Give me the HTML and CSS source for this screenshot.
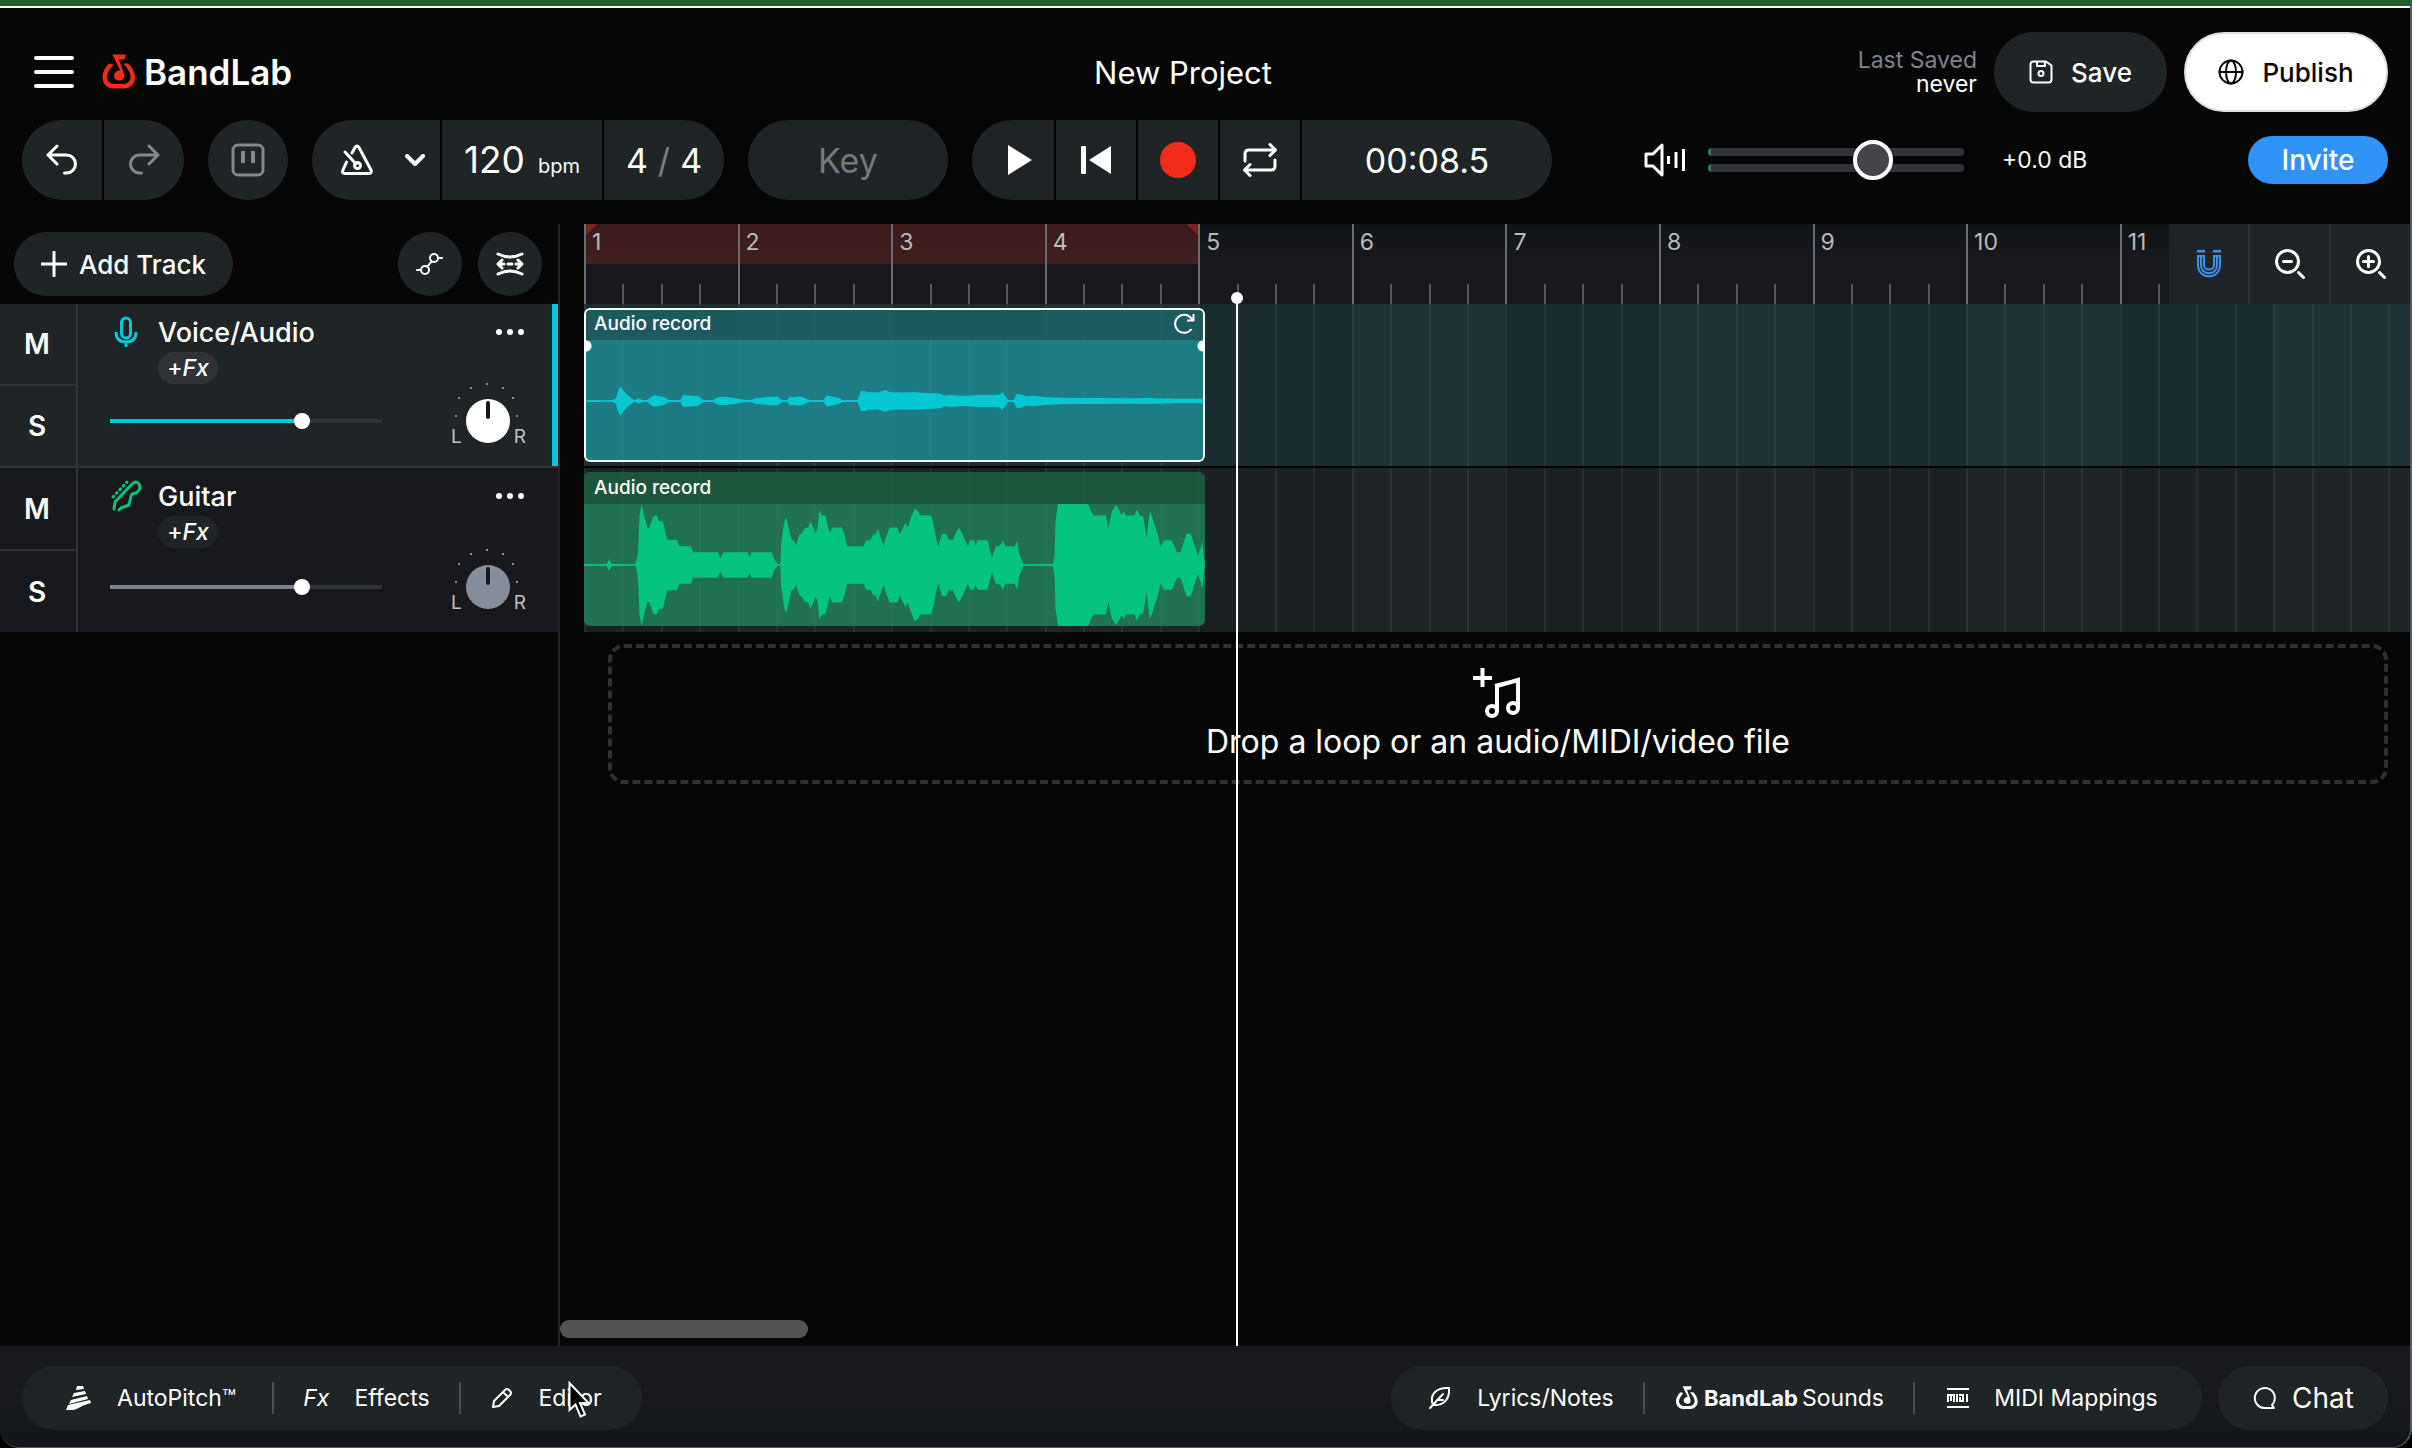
FILE: index.html
```html
<!DOCTYPE html>
<html lang="en">
<head>
    <meta charset="UTF-8">
    <meta name="viewport" content="width=device-width, initial-scale=1.0">
    <title>New Project - BandLab</title>
    <link rel="stylesheet" href="styles.css">
</head>
<body>
<svg class="defs" aria-hidden="true">
    <symbol id="logo" viewBox="0 0 36 36">
        <path d="M8 9.500C4 14 1.500 18 1.500 23c0 7 5 11.500 11 11.500h10.500c6 0 11-4.500 11-11.500 0-5-3-9.500-6.500-13.500l-5 0c4 5 7 9 7 13.500 0 4-3 7-7 7h-9.500c-4 0-7-3-7-7 0-4.500 3.500-8.500 6.500-12.500z" fill="currentColor"/>
        <path d="M11.500 0.500h13.500l-1.500 5h-5.500l4.800 13.500c2 5.500-1 7.500-4.500 7.500s-5.800-2.500-5.200-5.500 3.200-4.800 6-4.500z" fill="currentColor"/>
    </symbol>
    <symbol id="more" viewBox="0 0 28 8">
        <circle cx="3" cy="4" r="3"/><circle cx="14" cy="4" r="3"/><circle cx="25" cy="4" r="3"/>
    </symbol>
    <symbol id="pan-dots" viewBox="0 0 64 40">
        <path d="M1 33h2M4 15h2M16 5h2M32 1h2M48 5h2M58 15h2M62 33h2" stroke="#8a8d90" stroke-width="2"/>
    </symbol>
</svg>

<div class="app">
    <header class="topbar">
        <div class="brand">
            <button class="icon-button" aria-label="Menu">
                <svg width="40" height="32" viewBox="0 0 40 32"><path d="M2 2h36M2 16h36M2 30h36" class="line thick"/></svg>
            </button>
            <a class="logo" href="#">
                <svg class="logo-mark" width="36" height="36"><use href="#logo"/></svg>
                <span>BandLab</span>
            </a>
        </div>
        <h1>New Project</h1>
        <div class="account">
            <p class="saved"><span>Last Saved</span>never</p>
            <button class="pill save">
                <svg width="24" height="24" viewBox="0 0 24 24" class="line thin"><path d="M4 1.500h13l5.500 4v14q0 3-3 3h-15q-3 0-3-3v-15q0-3 3-3zM8 2v4h8v-4"/><circle cx="12" cy="13.500" r="2.500"/></svg>
                Save
            </button>
            <button class="pill publish">
                <svg width="26" height="26" viewBox="0 0 26 26" class="line thin"><circle cx="13" cy="13" r="11.500"/><ellipse cx="13" cy="13" rx="5" ry="11.500"/><path d="M1.500 13h23"/></svg>
                Publish
            </button>
        </div>
    </header>

    <div class="toolbar">
        <div class="group">
            <button class="cell" aria-label="Undo">
                <svg width="32" height="32" viewBox="0 0 32 32" class="line"><path d="M11 2L2 11l9 9M2.500 11h18c5 0 9 4 9 9s-4 9-9 9h-2"/></svg>
            </button>
            <button class="cell dim" aria-label="Redo">
                <svg width="32" height="32" viewBox="0 0 32 32" class="line"><path d="M21 2l9 9-9 9M29.500 11h-18c-5 0-9 4-9 9s4 9 9 9h2"/></svg>
            </button>
        </div>
        <div class="group">
            <button class="cell dim" aria-label="Sampler">
                <svg width="34" height="34" viewBox="0 0 34 34" class="line"><rect x="2" y="2" width="30" height="30" rx="5"/><path d="M12 8v12M22 8v12" stroke-width="4" stroke-linecap="butt"/></svg>
            </button>
        </div>
        <div class="group">
            <button class="cell metronome" aria-label="Metronome">
                <svg width="32" height="32" viewBox="0 0 32 32" class="line"><path d="M11 9L14 3.500q2-3 4 0L30 26q1 3.500-2 3.500h-24q-3.500 0-2-3.500L5.500 18M4 8l11 12"/><circle cx="16.500" cy="21.500" r="3"/></svg>
                <svg width="20" height="12" viewBox="0 0 20 12" class="line thick"><path d="M2 2l8 8 8-8"/></svg>
            </button>
            <label class="cell tempo"><input type="text" value="120"> bpm</label>
            <button class="cell meter">4<i>/</i>4</button>
        </div>
        <div class="group">
            <button class="cell key">Key</button>
        </div>
        <div class="group">
            <button class="cell transport first" aria-label="Play">
                <svg width="24" height="32" viewBox="0 0 24 32"><path d="M0 1l24 15L0 31z" fill="#fff"/></svg>
            </button>
            <button class="cell transport" aria-label="Go to start">
                <svg width="30" height="28" viewBox="0 0 30 28"><path d="M0 1q0-1 1-1h3q1 0 1 1v26q0 1-1 1h-3q-1 0-1-1zM30 0v28L8 14z" fill="#fff"/></svg>
            </button>
            <button class="cell transport" aria-label="Record"><span class="record-dot"></span></button>
            <button class="cell transport" aria-label="Loop">
                <svg width="34" height="34" viewBox="0 0 34 34" class="line"><path d="M27 1.500l5.500 5.500-5.500 5.500M32 7H6q-4 0-4 4v7M7 21.500L1.500 27 7 32.500M2 27h26q4 0 4-4v-6"/></svg>
            </button>
            <div class="cell time">00:08.5</div>
        </div>
        <div class="volume">
            <svg width="42" height="34" viewBox="0 0 42 34" class="line"><path d="M2 11h7l9-9v30l-9-9h-7zM24.500 13v8M32 9v16M39.500 6v22" stroke-linecap="butt"/></svg>
            <div class="levels">
                <span></span><span></span>
                <input type="range" min="0" max="100" value="67" aria-label="Master volume">
            </div>
            <output>+0.0 dB</output>
        </div>
        <button class="invite">Invite</button>
    </div>

    <main class="arranger">
        <section class="tracks">
            <div class="track-tools">
                <button class="pill add-track">
                    <svg width="26" height="26" viewBox="0 0 26 26" class="line"><path d="M13 1v24M1 13h24"/></svg>
                    Add Track
                </button>
                <button class="round" aria-label="Automation">
                    <svg width="28" height="24" viewBox="0 0 28 24" class="line thin"><circle cx="9" cy="18" r="4"/><circle cx="18" cy="6" r="4"/><path d="M11.500 14.500l4-5M1 18h4M22 6h4"/></svg>
                </button>
                <button class="round" aria-label="Stretch">
                    <svg width="28" height="24" viewBox="0 0 28 24" class="line"><path d="M2 2q12 6 24 0M2 22q12-6 24 0M6 8l-4 4 4 4M22 8l4 4-4 4M3 12h5M12 12h4M20 12h5"/></svg>
                </button>
            </div>

            <article class="track selected">
                <div class="mute-solo">
                    <button>M</button>
                    <button>S</button>
                </div>
                <div class="track-info">
                    <div class="track-head">
                        <svg class="track-icon line" width="32" height="32" viewBox="0 0 32 32"><rect x="11.500" y="2" width="9" height="20" rx="4.500"/><path d="M6 16q0 10 10 10t10-10M16 26v5" stroke-linecap="butt"/></svg>
                        <h2>Voice/Audio</h2>
                        <button class="icon-button" aria-label="More"><svg width="28" height="8" fill="#fff"><use href="#more"/></svg></button>
                    </div>
                    <button class="fx">+<i>Fx</i></button>
                    <div class="mix">
                        <input class="fader" type="range" value="72" aria-label="Volume">
                        <div class="pan">
                            <svg width="64" height="40"><use href="#pan-dots"/></svg>
                            <span>L</span><input type="range" value="50" aria-label="Pan"><span>R</span>
                        </div>
                    </div>
                </div>
            </article>

            <article class="track">
                <div class="mute-solo">
                    <button>M</button>
                    <button>S</button>
                </div>
                <div class="track-info">
                    <div class="track-head">
                        <svg class="track-icon line" width="32" height="32" viewBox="0 0 32 32"><path d="M4 29l1-7L22 4q4-4 7 0 3 5-3 9-4 0-5 3l-2 9-8 3-2 2"/><path d="M3 17L17 2" stroke-dasharray="1 4"/></svg>
                        <h2>Guitar</h2>
                        <button class="icon-button" aria-label="More"><svg width="28" height="8" fill="#fff"><use href="#more"/></svg></button>
                    </div>
                    <button class="fx">+<i>Fx</i></button>
                    <div class="mix">
                        <input class="fader" type="range" value="72" aria-label="Volume">
                        <div class="pan">
                            <svg width="64" height="40"><use href="#pan-dots"/></svg>
                            <span>L</span><input type="range" value="50" aria-label="Pan"><span>R</span>
                        </div>
                    </div>
                </div>
            </article>
        </section>

        <section class="timeline">
            <div class="canvas">
                <div class="ruler">
                    <span class="cycle">1</span><span class="cycle">2</span><span class="cycle">3</span><span class="cycle">4</span>
                    <span>5</span><span>6</span><span>7</span><span>8</span><span>9</span><span>10</span><span>11</span>
                    <div class="zoom-tools">
                        <button aria-label="Snap to grid">
                            <svg width="24" height="28" viewBox="0 0 24 28" fill="none" stroke="#3b91ea" stroke-width="2"><path d="M0 1h8M16 1h8" stroke-width="3"/><path d="M1 6h6v9c0 6 10 6 10 0V6h6v9c0 15-22 15-22 0zM4 6v9c0 11 16 11 16 0V6"/></svg>
                        </button>
                        <button aria-label="Zoom out">
                            <svg width="30" height="30" viewBox="0 0 30 30" class="line"><circle cx="12.500" cy="12.500" r="11"/><path d="M8.500 12.500h8M23.500 23.500l5 5"/></svg>
                        </button>
                        <button aria-label="Zoom in">
                            <svg width="30" height="30" viewBox="0 0 30 30" class="line"><circle cx="12.500" cy="12.500" r="11"/><path d="M7.500 12.500h10M12.500 7.500v10M23.500 23.500l5 5"/></svg>
                        </button>
                    </div>
                </div>

                <div class="lane selected">
                    <div class="clip voice">
                        <header>Audio record
                            <svg width="22" height="22" viewBox="0 0 22 22" class="line thin"><path d="M18.500 16a9 9 0 1 1-.5-11l2 2M20.500 1v6.500h-6.500" stroke-linecap="butt"/></svg>
                        </header>
                        <svg class="wave" viewBox="34 -182 1430 364" preserveAspectRatio="none">
                            <path id="wave-voice" d="M34 2V-2L98-1 104-5 108-10 112-30 118-44 124-32 134-18 148-4 154-3 158-8 164-6 168-2 180-2 188-12 196-17 212-14 222-10 230-3 256-2 262-18 272-17 296-15 306-6 312-2 330-2 340-10 350-13 362-12 378-10 402-4 410-2 415-4 420-3 428-9 440-10 460-13 480-13 488-5 492-2 502-2 508-13 520-12 526-14 536-13 548-6 554-2 586-2 592-16 602-15 612-12 622-8 630-3 664-2 672-30 680-30 690-26 712-25 728-33 740-26 770-25 796-26 856-22 864-16 880-18 910-15 940-18 970-18 990-19 998-26 1006-12 1012-2 1024-2 1030-20 1042-20 1050-14 1070-16 1096-12 1150-9 1210-9 1300-8 1330-9 1400-7 1464-7V2z"/>
                            <use href="#wave-voice" transform="scale(1 -1)"/>
                        </svg>
                    </div>
                </div>

                <div class="lane">
                    <div class="clip guitar">
                        <header>Audio record</header>
                        <svg class="wave" viewBox="34 -182 1430 364" preserveAspectRatio="none">
                            <path id="wave-guitar" d="M34 2V-2L86-2 92-18 98-2 152-2 158-30 162-150 167-182 172-150 180-112 184-110 192-140 196-148 202-148 206-132 216-130 222-95 226-75 248-75 254-56 280-56 286-38 342-38 348-20 356-38 410-38 416-24 420-38 466-38 472-18 480-2 486-2 488-60 494-120 499-144 506-110 512-75 518-72 522-58 530-90 536-95 542-110 550-112 556-130 562-112 568-95 572-110 576-162 582-148 590-148 600-95 606-112 628-112 634-92 640-56 678-56 684-74 694-74 700-90 706-92 711-108 718-80 724-58 730-85 738-112 756-112 761-92 768-108 774-125 780-112 788-145 796-168 804-160 808-148 834-148 840-115 846-75 850-55 858-92 868-94 874-75 884-75 890-95 897-112 906-92 912-74 918-56 924-74 932-74 936-58 940-74 964-74 970-40 974-22 982-55 992-58 999-74 1005-56 1026-56 1032-74 1036-35 1046-3 1114-2 1118-30 1120-130 1126-182 1195-182 1202-160 1208-148 1236-148 1242-110 1250-160 1260-180 1266-165 1272-150 1278-160 1282-148 1302-148 1308-166 1314-148 1322-145 1330-80 1334-130 1338-162 1346-130 1356-90 1362-55 1370-74 1388-74 1396-50 1400-38 1408-38 1416-70 1422-93 1432-93 1440-60 1448-28 1454-50 1458-70 1462-20 1464-2V2z"/>
                            <use href="#wave-guitar" transform="scale(1 -1)"/>
                        </svg>
                    </div>
                </div>

                <div class="drop-zone">
                    <svg width="50" height="50" viewBox="0 0 50 50" fill="none" stroke="#fff" stroke-width="4"><path d="M0 10h19M9.500 0v19M24 43V18l21-6v28M22 18l24-6" /><circle cx="19" cy="43" r="5"/><circle cx="40" cy="40" r="5"/></svg>
                    <p>Drop a loop or an audio/MIDI/video file</p>
                </div>
                <div class="playhead"></div>
            </div>
            <div class="scrollbar"></div>
        </section>
    </main>

    <footer class="bottombar">
        <div class="dock">
            <button class="autopitch">
                <svg width="26" height="24" viewBox="0 0 26 24" fill="#fff"><path d="M11 0h6l1 3-8 1zM8 7l11-2 1 3-14 3zM5 14l16-4 1 3-19 5zM2 19l22-5 1 3c-10 2-13 7-19 7H0z"/></svg>
                AutoPitch™
            </button>
            <button class="effects"><i>Fx</i> Effects</button>
            <button class="editor">
                <svg width="22" height="22" viewBox="0 0 22 22" class="line thin"><path d="M2 20l1-6L14 3q2-2 4 0l1 1q2 2 0 4L8 19zM12 5l5 5"/></svg>
                Editor
            </button>
            <svg class="cursor" width="28" height="38" viewBox="0 0 28 38"><path d="M1.500 2v27l6-5.500 5 12 4.500-2-5-11.500h8.500z" fill="#000" stroke="#fff" stroke-width="2"/></svg>
        </div>
        <div class="dock right">
            <button class="lyrics">
                <svg width="24" height="24" viewBox="0 0 24 24" class="line thin"><path d="M2 22L15 8M5 19C1 9 8 1 21 2c1 12-6 18-16 17M9 14h6"/></svg>
                Lyrics/Notes
            </button>
            <button class="sounds">
                <svg width="26" height="24" viewBox="0 0 36 36"><use href="#logo"/></svg>
                <b>BandLab</b>Sounds
            </button>
            <button class="midi">
                <svg width="22" height="20" viewBox="0 0 22 20" fill="none" stroke="#fff" stroke-width="2"><path d="M0 1h22M0 19h22M1 14V7h6v7M4 7v6M10 6v8M12 7h4v6h-3v-4M20 6v8"/></svg>
                MIDI Mappings
            </button>
        </div>
        <button class="chat">
            <svg width="24" height="24" viewBox="0 0 24 24" class="line thin"><path d="M20 19a10 10 0 1 0-8 3h10z"/></svg>
            Chat
        </button>
    </footer>
</div>
</body>
</html>
```
FILE: styles.css
```css
:root {
    --black: #060606;
    --panel: #1f2427;
    --track-bg: #18191f;
    --border: #303338;
    --cyan: #04c8d3;
    --green: #04c47e;
    --bar: 8.41%;
    --beat: 2.1025%;
}

* {
    box-sizing: border-box;
}

body {
    margin: 0;
    background: #000;
    color: #fff;
    font-family: 'Inter', 'Liberation Sans', sans-serif;
    font-size: 23px;
}

h1, h2, p {
    margin: 0;
    font-weight: 400;
}

button, input {
    font: inherit;
    color: inherit;
    border: none;
    margin: 0;
    padding: 0;
    background: none;
}

button {
    display: flex;
    align-items: center;
    justify-content: center;
    cursor: pointer;
    white-space: nowrap;
}

svg {
    flex: none;
}

.defs {
    display: none;
}

.line {
    fill: none;
    stroke: currentColor;
    stroke-width: 3;
    stroke-linecap: round;
    stroke-linejoin: round;
}

.thick {
    stroke-width: 4;
}

.thin {
    stroke-width: 2;
}

.app {
    display: flex;
    flex-direction: column;
    min-height: 100vh;
    background: var(--black);
    border-top: 6px solid #245f2b;
    border-right: 2px solid #56585c;
    border-bottom: 1px solid #56585c;
    border-radius: 0 0 20px 20px;
    overflow: hidden;
}

/* Top bar */
.topbar {
    display: grid;
    grid-template-columns: 1fr auto 1fr;
    align-items: center;
    padding: 24px 22px 8px 34px;
    border-top: 2px solid #fff;
}

.topbar h1 {
    font-size: 31px;
    margin-right: 56px;
}

.brand, .logo, .account {
    display: flex;
    align-items: center;
}

.brand {
    gap: 27px;
}

.logo {
    gap: 7px;
    color: #fff;
    font-size: 35px;
    font-weight: 600;
    text-decoration: none;
}

.logo-mark {
    color: #f32c19;
}

.account {
    justify-content: flex-end;
    gap: 17px;
}

.saved {
    line-height: 24px;
    text-align: right;
}

.saved span {
    display: block;
    color: #7c848e;
}

.pill {
    height: 80px;
    border-radius: 40px;
    background: var(--panel);
    font-size: 26px;
    font-weight: 500;
}

.save {
    width: 173px;
    gap: 18px;
}

.publish {
    width: 204px;
    gap: 18px;
    background: #fff;
    color: #060606;
    border: 2px solid #dcdee2;
}

/* Toolbar */
.toolbar {
    display: flex;
    align-items: center;
    gap: 24px;
    padding: 0 22px;
    margin-bottom: 24px;
}

.group {
    display: flex;
    gap: 2px;
    height: 80px;
    border-radius: 40px;
    overflow: hidden;
}

.cell {
    display: flex;
    align-items: center;
    justify-content: center;
    width: 80px;
    background: var(--panel);
}

.dim {
    color: #85888a;
}

.metronome {
    width: 128px;
    gap: 32px;
    padding-left: 14px;
}

.tempo {
    width: 160px;
    gap: 4px;
    font-size: 20px;
    align-items: baseline;
    line-height: 80px;
}

.tempo input {
    width: 70px;
    font-size: 37px;
}

.meter {
    width: 120px;
    gap: 10px;
    font-size: 34px;
}

.meter i {
    color: #7d8082;
    font-style: normal;
}

.key {
    width: 200px;
    color: #76797b;
    font-size: 34px;
}

.transport.first {
    width: 82px;
    padding-left: 14px;
}

.record-dot {
    width: 36px;
    height: 36px;
    border-radius: 50%;
    background: #f32c19;
}

.time {
    width: 250px;
    font-size: 34px;
}

.volume {
    display: flex;
    align-items: center;
    margin-left: 68px;
}

.levels {
    position: relative;
    display: grid;
    gap: 8px;
    width: 256px;
    margin: 0 38px 0 22px;
}

.levels span {
    height: 8px;
    border-radius: 4px;
    background: linear-gradient(90deg, #25806c 3px, #303338 3px);
}

.levels input {
    position: absolute;
    top: -8px;
    left: 0;
    width: 100%;
    height: 40px;
}

input[type="range"] {
    appearance: none;
    background: none;
}

.levels input::-webkit-slider-thumb {
    appearance: none;
    width: 40px;
    height: 40px;
    border: 4px solid #fff;
    border-radius: 50%;
    background: #444548;
}

.invite {
    width: 140px;
    height: 48px;
    margin-left: auto;
    border-radius: 24px;
    background: #2f93f8;
    font-size: 28px;
    font-weight: 500;
}

/* Tracks */
.arranger {
    display: flex;
    flex: 1;
}

.tracks {
    width: 560px;
    flex: none;
    border-right: 2px solid #212227;
}

.track-tools {
    display: flex;
    gap: 16px;
    height: 80px;
    padding: 8px 16px 8px 14px;
}

.add-track {
    width: 219px;
    height: 64px;
    gap: 12px;
    margin-right: auto;
}

.round {
    width: 64px;
    height: 64px;
    border-radius: 50%;
    background: var(--panel);
}

.track {
    display: flex;
    height: 164px;
    background: var(--track-bg);
}

.track.selected {
    background: linear-gradient(270deg, var(--cyan) 6px, var(--panel) 6px);
    border-bottom: 2px solid var(--border);
}

.mute-solo {
    display: grid;
    width: 78px;
    border-right: 2px solid var(--border);
    font-size: 28px;
    font-weight: 600;
}

.mute-solo button:first-child {
    border-bottom: 2px solid var(--border);
}

.mute-solo button {
    padding-right: 2px;
}

.track-info {
    display: flex;
    flex: 1;
    flex-direction: column;
    align-items: flex-start;
    padding: 12px 32px 11px 32px;
}

.track-head, .mix {
    display: flex;
    align-items: center;
    width: 100%;
}

.track-head {
    gap: 16px;
    height: 32px;
}

.track-head h2 {
    flex: 1;
    font-size: 27px;
    font-weight: 500;
}

.track-head .icon-button {
    margin-right: 2px;
}

.track-icon {
    color: var(--green);
}

.selected .track-icon {
    color: var(--cyan);
}

.fx {
    width: 60px;
    height: 32px;
    margin: 4px 0 0 48px;
    border-radius: 16px;
    background: var(--panel);
    font-size: 23px;
    font-weight: 500;
}

.selected .fx {
    background: #303239;
}

.mix {
    justify-content: space-between;
    margin-top: auto;
    height: 68px;
}

.fader {
    width: 272px;
    height: 16px;
}

.fader::-webkit-slider-runnable-track {
    height: 4px;
    background: linear-gradient(90deg, #7b838f 72%, var(--border) 72%);
}

.selected .fader::-webkit-slider-runnable-track {
    background: linear-gradient(90deg, var(--cyan) 72%, var(--border) 72%);
}

.fader::-webkit-slider-thumb {
    appearance: none;
    width: 16px;
    height: 16px;
    margin-top: -6px;
    border-radius: 50%;
    background: #fff;
}

.pan {
    position: relative;
    display: flex;
    align-items: center;
    gap: 4px;
    color: #c0c2c4;
    font-size: 19px;
}

.pan svg {
    position: absolute;
    top: -12px;
    left: 3px;
}

.pan span {
    padding-top: 30px;
}

.pan input {
    width: 44px;
    height: 44px;
    border-radius: 50%;
    background: #868e9c;
}

.selected .pan input {
    background: #fff;
}

.pan input::-webkit-slider-runnable-track {
    height: 44px;
}

.pan input::-webkit-slider-thumb {
    appearance: none;
    width: 4px;
    height: 18px;
    margin-top: 2px;
    border-radius: 2px;
    background: #14181c;
}

/* Timeline */
.timeline {
    display: flex;
    flex: 1;
    flex-direction: column;
    min-width: 0;
}

.canvas {
    position: relative;
    flex: 1;
    margin-left: 24px;
}

.ruler {
    position: relative;
    display: flex;
    height: 80px;
    overflow: hidden;
    background:
        repeating-linear-gradient(90deg, #55575a 0 2px, transparent 2px var(--beat)) bottom / 100% 20px no-repeat,
        linear-gradient(#101417, #18191f 50%);
}

.ruler span {
    flex: 0 0 var(--bar);
    padding: 6px 0 0 6px;
    border-left: 2px solid #6b6d70;
    color: #b9bbbd;
    line-height: 24px;
}

.ruler .cycle {
    background: linear-gradient(#3d1b1a, #401f1e) top / 100% 40px no-repeat;
}

.ruler .cycle:first-child {
    background:
        linear-gradient(135deg, #7a2321 8px, transparent 8px),
        linear-gradient(#3d1b1a, #401f1e) top / 100% 40px no-repeat;
}

.ruler .cycle:nth-child(4) {
    background:
        linear-gradient(225deg, #7a2321 8px, transparent 8px),
        linear-gradient(#3d1b1a, #401f1e) top / 100% 40px no-repeat;
}

/* Sits over the right end of the ruler */
.zoom-tools {
    position: absolute;
    top: 0;
    right: 0;
    display: flex;
    gap: 2px;
    background: #2d3134;
}

.zoom-tools button {
    width: 79px;
    height: 80px;
    background: var(--panel);
}

.lane {
    height: 164px;
    padding-top: 4px;
    background:
        repeating-linear-gradient(90deg, rgba(255, 255, 255, 0.06) 0 2px, transparent 2px var(--beat)),
        repeating-linear-gradient(90deg, #1b2022 0 var(--bar), #1f2427 var(--bar) 16.82%);
}

.lane.selected {
    border-bottom: 2px solid #060606;
    background:
        repeating-linear-gradient(90deg, rgba(255, 255, 255, 0.05) 0 2px, transparent 2px var(--beat)),
        repeating-linear-gradient(90deg, #1b2c2f 0 var(--bar), #203235 var(--bar) 16.82%);
}

.clip {
    position: relative;
    display: flex;
    flex-direction: column;
    width: 34%;
    height: 154px;
    border-radius: 6px;
    overflow: hidden;
}

.clip header {
    display: flex;
    justify-content: space-between;
    flex: none;
    height: 32px;
    padding: 0 10px;
    font-size: 19px;
    font-weight: 500;
    line-height: 32px;
}

.clip header svg {
    margin-top: 5px;
}

.wave {
    width: 100%;
    height: 122px;
}

.voice {
    background: rgba(31, 141, 150, 0.82);
}

.voice header {
    background: rgba(27, 70, 74, 0.6);
}

/* Selection outline with the two fade handles */
.voice::after {
    content: "";
    position: absolute;
    inset: 0;
    border: 2px solid #fff;
    border-radius: 6px;
    background:
        radial-gradient(circle at 0 36px, #fff 5px, transparent 6px),
        radial-gradient(circle at 100% 36px, #fff 5px, transparent 6px);
}

.voice .wave {
    fill: var(--cyan);
}

.guitar {
    background: rgba(33, 132, 92, 0.82);
}

.guitar header {
    background: rgba(26, 70, 46, 0.6);
}

.guitar .wave {
    fill: var(--green);
}

.drop-zone {
    display: flex;
    flex-direction: column;
    align-items: center;
    gap: 4px;
    height: 140px;
    margin: 12px 22px 0 24px;
    padding-top: 20px;
    border: 4px dashed #2f3035;
    border-radius: 16px;
    font-size: 32px;
}

.playhead {
    position: absolute;
    top: 74px;
    bottom: -26px;
    left: 35.7%;
    width: 2px;
    background: #fff;
}

.playhead::before {
    content: "";
    position: absolute;
    top: -6px;
    left: -5px;
    width: 12px;
    height: 12px;
    border-radius: 50%;
    background: #fff;
}

.scrollbar {
    width: 248px;
    height: 18px;
    margin-bottom: 8px;
    border-radius: 9px;
    background: #535353;
}

/* Bottom bar */
.bottombar {
    display: flex;
    gap: 16px;
    padding: 20px 22px 17px;
    background: linear-gradient(#18191f 40%, #131719);
}

.dock {
    position: relative;
    display: flex;
    align-items: center;
    height: 64px;
    border-radius: 32px;
    background: var(--panel);
}

.dock.right {
    margin-left: auto;
}

.dock button {
    height: 32px;
    gap: 25px;
}

.dock button + button {
    border-left: 2px solid #4a4e51;
}

.autopitch {
    width: 250px;
    padding-left: 8px;
}

.effects {
    width: 187px;
}

.editor {
    width: 183px;
    padding-right: 10px;
}

.lyrics {
    width: 252px;
    padding-left: 8px;
}

.dock .sounds {
    width: 270px;
    gap: 4px;
}

.sounds b {
    font-size: 22px;
    font-weight: 700;
}

.midi {
    width: 289px;
    padding-right: 12px;
}

.chat {
    width: 170px;
    height: 64px;
    gap: 16px;
    border-radius: 32px;
    background: var(--panel);
    font-size: 28px;
}

/* Mouse pointer over the Editor button */
.cursor {
    position: absolute;
    top: 15px;
    left: 546px;
}
```
